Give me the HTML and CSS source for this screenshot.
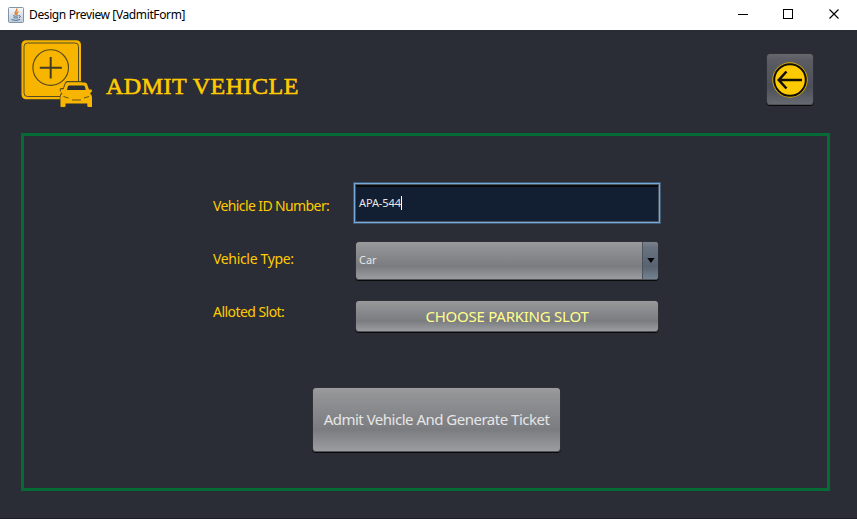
FILE: index.html
```html
<!DOCTYPE html>
<html lang="en">
<head>
<meta charset="utf-8">
<title>Design Preview [VadmitForm]</title>
<link rel="stylesheet" href="styles.css">
</head>
<body>
<div class="window">
  <header class="titlebar">
    <svg class="java" width="16" height="16" viewBox="0 0 16 16">
      <defs><linearGradient id="jg" x2="0" y2="1"><stop stop-color="#f9fafc"/><stop offset="1" stop-color="#bccbd9"/></linearGradient></defs>
      <rect x=".5" y=".5" width="15" height="15" rx="1" fill="url(#jg)" stroke="#8094aa"/>
      <path d="M8.7 1.5C10 4 5.5 4.500 7.500 8M10.500 4.500C8 5.500 8.500 6.500 9 8" fill="none" stroke="#e8731a" stroke-width="1.300"/>
      <path d="M5 8.700Q7.500 9.800 10.500 8.700M5.500 10.700Q8 11.500 10 10.700M3.500 12.500Q7.500 14.500 12 12.500M11 8.500Q14 9 11 11" fill="none" stroke="#4d7190"/>
    </svg>
    <span class="caption">Design Preview [VadmitForm]</span>
    <svg class="controls" width="137" height="30" viewBox="0 0 137 30" fill="none" stroke="#000" shape-rendering="crispEdges">
      <path d="M18 14.500h10M63.500 9.500h9v9h-9z"/>
      <path d="M109.500 9.500l9 9M118.500 9.500l-9 9" shape-rendering="auto" stroke-width="1.150"/>
    </svg>
  </header>
  <main class="content">
    <div class="heading">
      <svg class="logo" width="72" height="70" viewBox="0 0 72 70">
        <rect x=".5" y=".3" width="59.500" height="59" rx="4.500" fill="#f7b500"/>
        <rect x="3" y="3" width="54.500" height="53.500" rx="3.500" fill="none" stroke="#554c27" stroke-width="1"/>
        <circle cx="29.700" cy="27.600" r="17.800" fill="none" stroke="#554822" stroke-width="1.100"/>
        <path d="M18.800 27.800h22M29.700 17v21.500" stroke="#423b25" stroke-width="2"/>
        <path d="M46.500 42.500h17.500q1.500 0 2 1.500l2 5.500h2.500q1.500 1.500-.500 3l-1 1q2 1.500 2 3.500v9.500q0 .500-.700.500h-3q-1 0-1-1v-2.500H44.500V66q0 1-1 1h-3q-1 0-1-1V57q0-2 2-3.500l-1-1q-2-1.500-.500-3h2.500l2-5.500q.500-1.500 2-1.500z" transform="translate(0 -.7)" fill="#f7b500" stroke="#554c27" stroke-width="1.400"/>
        <path d="M60.700 36h12v34H38V60h22.700z" fill="#2b2d36"/>
        <path d="M46.500 42.500h17.500q1.500 0 2 1.500l2 5.500h2.500q1.500 1.500-.500 3l-1 1q2 1.500 2 3.500v9.500q0 .500-.700.500h-3q-1 0-1-1v-2.500H44.500V66q0 1-1 1h-3q-1 0-1-1V57q0-2 2-3.500l-1-1q-2-1.500-.500-3h2.500l2-5.500q.500-1.500 2-1.500z" fill="#f7b500"/>
        <path d="M48 45.500h14.500q1.200 0 1.500 1.500l.700 3H46l.700-3q.300-1.500 1.300-1.500z" fill="#2b2d36"/>
        <path d="M42.500 56.500l5 1.500M68 56.500L63 58M51 60h9" stroke="#66531d" fill="none"/>
      </svg>
      <h1>ADMIT VEHICLE</h1>
      <button class="btn back" aria-label="Back">
        <svg width="36" height="36" viewBox="0 0 36 36">
          <circle cx="18" cy="18" r="17.700" fill="#d6ac08"/>
          <circle cx="18" cy="18" r="15.800" fill="#ffcb00" stroke="#110f05" stroke-width="2"/>
          <path d="M30 18H7.500M14.500 9.500L6.800 18l7.700 8.500" fill="none" stroke="#131007" stroke-width="2.600"/>
        </svg>
      </button>
    </div>
    <section class="panel">
      <div class="row id-row"><label class="l1">Vehicle ID Number:</label><div class="input"><span>APA-544</span></div></div>
      <div class="row type-row"><label class="l2">Vehicle Type:</label>
        <div class="btn combo"><span>Car</span><i class="drop"><svg width="8" height="5" viewBox="0 0 8 5"><path d="M.3 0h7.200L3.900 5z"/></svg></i></div>
      </div>
      <div class="row slot-row"><label class="l3">Alloted Slot:</label><button class="btn choose"><span>CHOOSE PARKING SLOT</span></button></div>
      <button class="btn admit"><span>Admit Vehicle And Generate Ticket</span></button>
    </section>
  </main>
</div>
</body>
</html>
```
FILE: styles.css
```css
* { box-sizing: border-box; }
body { margin: 0; overflow: hidden; }
.window {
  width: 857px; height: 519px;
  display: flex; flex-direction: column;
  background: #2b2d36;
  font-family: "Noto Sans", sans-serif;
  white-space: nowrap;
}
.titlebar { height: 30px; flex: none; display: flex; align-items: center; background: #fff; }
.java { margin: -1px 5px 0 8px; }
.caption { font-size: 12px; line-height: 30px; letter-spacing: -.38px; color: #000; }
.controls { margin-left: auto; }
.content { flex: 1; padding: 10px 27px 0 21px; border-bottom: 1px solid #1f2027; }
.heading { height: 93px; display: flex; align-items: flex-start; }
h1 {
  margin: 33px 0 0 13px;
  font: 24px/26px "Liberation Serif", serif;
  -webkit-text-stroke: .6px #ffcb00;
  letter-spacing: .5px; color: #ffcb00;
}
.btn {
  display: flex; align-items: center; justify-content: center;
  padding: 0; border: 1px solid #303138; border-bottom-color: #505257; border-radius: 4px;
  background: linear-gradient(#9b9b9d 0, #929395 12%, #7b7c80 66%, #9b9c9f 100%);
  box-shadow: 0 1px 0 #08090b;
  font-family: inherit;
}
.back {
  width: 48px; height: 52px; margin: 13px 16px 0 auto; padding-top: 1px;
  background: linear-gradient(#67686d 0, #5b5d64 12%, #4c4f57 66%, #66696f 100%);
}
.panel { height: 358px; border: 3px solid #046b35; padding: 46px 0 0 189px; }
.row { display: flex; align-items: flex-start; }
label { width: 142px; font-size: 14px; line-height: 20px; color: #ffcb00; }
.id-row { height: 59px; }
.id-row label { margin-top: 14px; }
.type-row { height: 59px; }
.type-row label { margin-top: 8px; }
.slot-row { height: 87px; }
.slot-row label { margin-top: 2px; }
.l1 { letter-spacing: -.61px; }
.l2 { letter-spacing: -.33px; }
.l3 { letter-spacing: -.55px; }
.input {
  width: 306px; height: 40px; margin: 1px 0 0 -1px; padding-left: 4px;
  display: flex; align-items: center;
  border: 1px solid #76a9d8; outline: 1px solid #405a75;
  background: #121e31; box-shadow: inset 0 0 0 1px #47535f, inset 0 3px 0 #07090d;
  color: #e6e6e6; font-size: 11px;
}
.input span { line-height: 14px; border-right: 1px solid #fff; letter-spacing: -.1px; }
.combo { width: 304px; height: 39px; justify-content: space-between; padding-left: 3px; color: #e6e6e6; font-size: 11px; overflow: hidden; }
.combo > span { margin-top: -2px; }
.drop { width: 16px; height: 37px; display: flex; align-items: center; justify-content: center; border-left: 1px solid #4c535d; background: linear-gradient(#7b828b, #687280 15%, #596270 66%, #738292); }
.choose { width: 304px; height: 32px; color: #ffff8c; font-size: 15px; }
.choose span { letter-spacing: -.25px; }
.admit { width: 249px; height: 65px; margin-left: 99px; padding-bottom: 2px; color: #e6e6e6; font-size: 15px; }
.admit span { letter-spacing: -.5px; }
```
